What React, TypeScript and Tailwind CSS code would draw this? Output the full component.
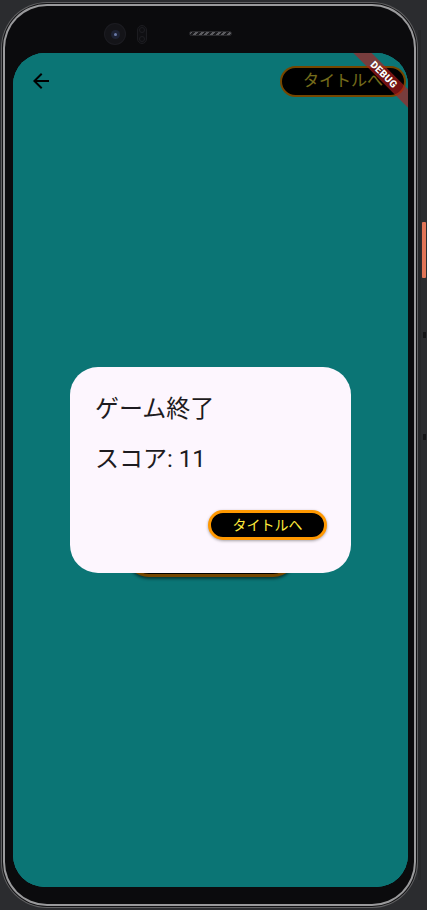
import React from "react";

function ArrowBack() {
  return (
    <svg width="24" height="24" viewBox="0 0 24 24" fill="#000">
      <path d="M20 11H7.83l5.59-5.59L12 4l-8 8 8 8 1.41-1.41L7.83 13H20v-2z" />
    </svg>
  );
}

export default function App() {
  return (
    <div className="relative w-[427px] h-[910px] bg-[#2b2c2f] overflow-hidden pl-[1px] pt-[2px] font-[family-name:Roboto,'Noto_Sans_CJK_JP',sans-serif]">
      {/* side buttons */}
      <div className="absolute left-[418px] top-[30px] w-[3px] h-[850px] bg-[#262729]" />
      <div className="absolute left-[422px] top-[222px] w-[4px] h-[56px] rounded-[1px] bg-[#e07558]" />
      <div className="absolute left-[423px] top-[332px] w-[3px] h-[6px] bg-[#151517]" />
      <div className="absolute left-[423px] top-[434px] w-[3px] h-[6px] bg-[#151517]" />

      {/* phone body */}
      <div className="w-[417px] h-[906px] rounded-[46px] bg-[#616163] p-[1px]">
        <div className="w-full h-full rounded-[45px] bg-[#121214] p-[1px]">
          <div className="w-full h-full rounded-[44px] bg-[#9a9a9c] p-[2px]">
            <div className="w-full h-full rounded-[42px] bg-[#0b0b0d] flex flex-col pl-[8px] pr-[6px] pb-[17px]">
              {/* top bezel */}
              <div className="h-[47px] flex items-start pl-[92px] shrink-0">
                <div className="mt-[18px] w-[20px] h-[20px] rounded-full bg-[#141418] flex items-center justify-center shadow-[0_0_0_1px_#1c1c21]">
                  <div className="w-[9px] h-[9px] rounded-full bg-[#1d2233] flex items-center justify-center">
                    <div className="w-[3px] h-[3px] rounded-full bg-[#6a7aa8]" />
                  </div>
                </div>
                <div className="ml-[12px] mt-[19px] w-[10px] h-[19px] rounded-full bg-[#0f0f12] border border-[#1c1c20] flex flex-col items-center justify-around">
                  <div className="w-[6px] h-[6px] rounded-full border border-[#1e1e22]" />
                  <div className="w-[6px] h-[6px] rounded-full border border-[#1e1e22]" />
                </div>
                <div className="ml-[42px] mt-[25px] w-[43px] h-[5px] rounded-full bg-[repeating-linear-gradient(135deg,#5c5c60_0px,#5c5c60_2px,#1a1a1d_2px,#1a1a1d_4px)] border border-[#2a2a2d]" />
              </div>

              {/* screen */}
              <div className="relative flex-1 rounded-[32px] overflow-hidden bg-[#18ffff] flex flex-col">
                {/* app bar */}
                <div className="h-[56px] flex items-center justify-between shrink-0">
                  <div className="w-[56px] h-[56px] flex items-center justify-center">
                    <ArrowBack />
                  </div>
                  <div className="mr-[2px] h-[31px] w-[126px] rounded-full border-2 border-[#ff9800] bg-black flex items-center justify-center text-[16px] text-[#ffeb3b]">
                    タイトルへ
                  </div>
                </div>
                {/* body */}
                <div className="flex-1 flex flex-col items-center pt-[420px]">
                  <div className="w-[172px] h-[48px] rounded-full border-[3px] border-[#ff9800] bg-black shadow-[0_2px_3px_rgba(0,0,0,0.5)]" />
                </div>

                {/* scrim */}
                <div className="absolute inset-0 bg-black/[0.54]" />

                {/* dialog */}
                <div className="absolute inset-0 flex items-center justify-center">
                  <div className="w-[281px] h-[206px] rounded-[28px] bg-[#fdf6fe] flex flex-col pt-[24px] px-[25px] pb-[33px] text-[#1d1b20]">
                    <div className="text-[24px] leading-[32px] mt-[2px]">ゲーム終了</div>
                    <div className="text-[24px] leading-[32px] mt-[18px]">スコア: 11</div>
                    <div className="mt-auto flex justify-end -mr-[1px]">
                      <div className="w-[119px] h-[30px] rounded-full border-[3px] border-[#ff9800] bg-black flex items-center justify-center text-[14px] text-[#ffeb3b] shadow-[0_1px_3px_rgba(0,0,0,0.35)]">
                        タイトルへ
                      </div>
                    </div>
                  </div>
                </div>

                {/* debug banner */}
                <div className="absolute left-[311px] top-[15px] w-[120px] h-[13px] rotate-45 bg-[#b71c1c]/[0.63] flex items-center justify-center">
                  <span className="text-white text-[10px] leading-[10px] font-black tracking-[0.3px] [text-shadow:0_0_1px_rgba(0,0,0,0.5)]">
                    DEBUG
                  </span>
                </div>
              </div>
            </div>
          </div>
        </div>
      </div>
    </div>
  );
}
